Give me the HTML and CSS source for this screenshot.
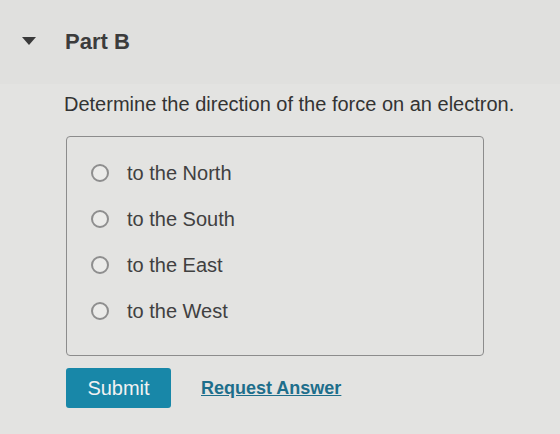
FILE: index.html
```html
<!DOCTYPE html>
<html lang="en">
<head>
    <meta charset="UTF-8">
    <meta name="viewport" content="width=device-width, initial-scale=1.0">
    <title>Part B</title>
    <link rel="stylesheet" href="styles.css">
</head>
<body>
    <div class="part-header">
        <span class="toggle"></span>
        <h2>Part B</h2>
    </div>
    <div class="part-body">
        <p class="question">Determine the direction of the force on an electron.</p>
        <div class="choices">
            <label class="choice"><span class="radio"></span>to the North</label>
            <label class="choice"><span class="radio"></span>to the South</label>
            <label class="choice"><span class="radio"></span>to the East</label>
            <label class="choice"><span class="radio"></span>to the West</label>
        </div>
        <div class="actions">
            <button class="submit-button">Submit</button>
            <a class="request-link" href="#">Request Answer</a>
        </div>
    </div>
</body>
</html>
```

FILE: styles.css
```css
body {
    margin: 0;
    background-color: #e3e3e1;
    color: #363636;
    font-family: "Liberation Sans", Arial, sans-serif;
}
.part-header {
    display: flex;
    align-items: center;
    height: 84px;
    padding-left: 22px;
    gap: 29px;
    background-color: #e0e0de;
}
.toggle {
    width: 0;
    height: 0;
    border-left: 7px solid transparent;
    border-right: 7px solid transparent;
    border-top: 8px solid #3a3a3a;
    margin-top: -2px;
}
.part-header h2 {
    margin: 0;
    font-size: 22px;
    color: #3c3c3c;
}
.part-body {
    padding-left: 64px;
}
.question {
    margin: 8px 0 20px;
    font-size: 20px;
    line-height: 24px;
    color: #333333;
}
.choices {
    width: 418px;
    margin-left: 2px;
    box-sizing: border-box;
    border: 1px solid #8c8c8c;
    border-radius: 4px;
    padding: 13px 0 21px 24px;
}
.choice {
    display: flex;
    align-items: center;
    gap: 18px;
    height: 46px;
    font-size: 20px;
    color: #404040;
}
.radio {
    flex-shrink: 0;
    width: 18px;
    height: 18px;
    box-sizing: border-box;
    border: 2px solid #8e8e8e;
    border-radius: 50%;
    background-color: #ebebe9;
}
.actions {
    display: flex;
    align-items: center;
    gap: 30px;
    margin: 12px 0 0 2px;
}
.submit-button {
    width: 105px;
    height: 40px;
    background-color: #1887a8;
    color: #f2f2f2;
    border: none;
    border-radius: 3px;
    font-family: inherit;
    font-size: 20px;
}
.request-link {
    color: #1d6e8b;
    font-size: 18px;
    font-weight: bold;
    text-decoration: underline;
}
```
